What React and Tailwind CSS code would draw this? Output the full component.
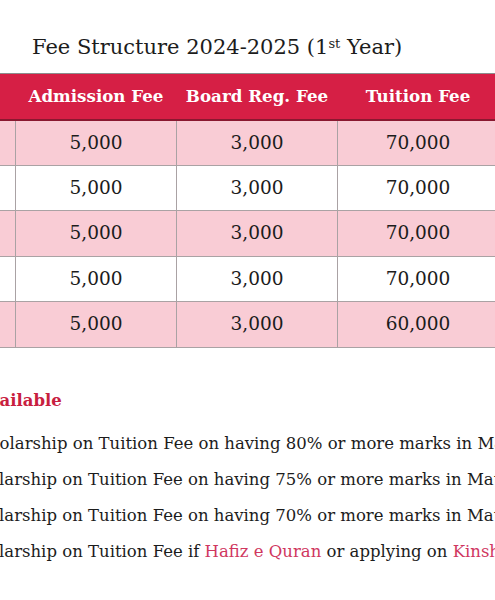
import React from 'react';

const rows = [
    { program: 'FSc', admission: '5,000', board: '3,000', tuition: '70,000', total: '78,000' },
    { program: 'FSc', admission: '5,000', board: '3,000', tuition: '70,000', total: '78,000' },
    { program: 'ICS', admission: '5,000', board: '3,000', tuition: '70,000', total: '78,000' },
    { program: 'I.Com', admission: '5,000', board: '3,000', tuition: '70,000', total: '78,000' },
    { program: 'FA', admission: '5,000', board: '3,000', tuition: '60,000', total: '68,000' }
];

const scholarships = [
    { amount: '100%', text: 'Scholarship on Tuition Fee on having 80% or more marks in Matric' },
    { amount: '50%', text: 'Scholarship on Tuition Fee on having 75% or more marks in Matric' },
    { amount: '25%', text: 'Scholarship on Tuition Fee on having 70% or more marks in Matric' }
];

function App() {
    return (
        <div className="w-[495px] h-[600px] overflow-hidden bg-white text-[#1c1c1c]" style={{ fontFamily: '"DejaVu Serif", "Liberation Serif", serif' }}>
            <div className="w-[1100px] -ml-[205px]">
                <h2 className="pt-[33px] pl-[237px] text-[21px] leading-[28px] font-normal">
                    Fee Structure 2024-2025 (1<sup className="text-[13px]">st</sup> Year)
                </h2>

                <table className="mt-[12px] table-fixed border-collapse w-[864px]">
                    <thead>
                        <tr className="h-[46px] bg-[#d61f45] text-white border-t border-t-[#8c8c8c] border-b-2 border-b-[#8a1830]">
                            <th className="w-[220px] text-[16.7px] font-bold">Program</th>
                            <th className="w-[161px] text-[16.7px] font-bold">Admission Fee</th>
                            <th className="w-[161px] text-[16.7px] font-bold">Board Reg. Fee</th>
                            <th className="w-[161px] text-[16.7px] font-bold">Tuition Fee</th>
                            <th className="w-[161px] text-[16.7px] font-bold">Total</th>
                        </tr>
                    </thead>
                    <tbody>
                        {rows.map((row, i) => (
                            <tr key={i} className={`h-[45.5px] ${i % 2 === 0 ? 'bg-[#f9ccd5]' : 'bg-white'}`}>
                                <td className="border border-[#aaa2a4] text-center text-[18.5px]">{row.program}</td>
                                <td className="border border-[#aaa2a4] text-center text-[18.5px]">{row.admission}</td>
                                <td className="border border-[#aaa2a4] text-center text-[18.5px]">{row.board}</td>
                                <td className="border border-[#aaa2a4] text-center text-[18.5px]">{row.tuition}</td>
                                <td className="border border-[#aaa2a4] text-center text-[18.5px]">{row.total}</td>
                            </tr>
                        ))}
                    </tbody>
                </table>

                <div className="pl-[58px]">
                    <h3 className="mt-[40px] text-[16.5px] leading-[26px] font-bold text-[#c8203f]">
                        Scholarships Available
                    </h3>
                    <ul className="mt-[12px] pl-[63px] text-[16.5px] leading-[36px]">
                        {scholarships.map((s) => (
                            <li key={s.text} className="whitespace-nowrap">
                                {s.amount} {s.text}
                            </li>
                        ))}
                        <li className="whitespace-nowrap">
                            50% Scholarship on Tuition Fee if <span className="text-[#d0375f]">Hafiz e Quran</span> or applying on <span className="text-[#d0375f]">Kinship</span> basis
                        </li>
                    </ul>
                </div>
            </div>
        </div>
    );
}

export default App;
